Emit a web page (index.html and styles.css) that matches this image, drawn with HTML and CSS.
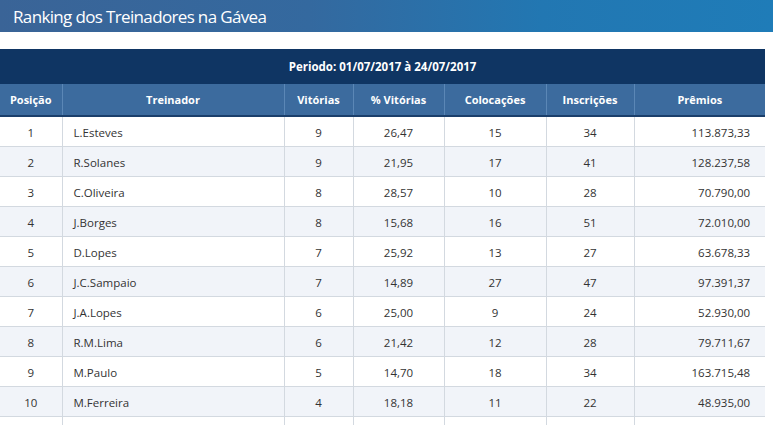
FILE: index.html
```html
<!DOCTYPE html>
<html lang="pt">
<head>
<meta charset="utf-8">
<title>Ranking dos Treinadores na Gávea</title>
<link rel="stylesheet" href="styles.css">
</head>
<body>
<header class="title-bar">
  <h1 class="title">Ranking dos Treinadores na Gávea</h1>
</header>
<main class="content">
  <table class="ranking">
    <colgroup>
      <col class="c-pos"><col class="c-name"><col class="c-vit"><col class="c-pct"><col class="c-col"><col class="c-ins"><col class="c-prem">
    </colgroup>
    <thead>
      <tr class="period-row"><th colspan="7">Periodo: 01/07/2017 à 24/07/2017</th></tr>
      <tr class="head-row">
        <th>Posição</th><th>Treinador</th><th>Vitórias</th><th>% Vitórias</th><th>Colocações</th><th>Inscrições</th><th>Prêmios</th>
      </tr>
    </thead>
    <tbody>
      <tr><td>1</td><td class="name">L.Esteves</td><td>9</td><td>26,47</td><td>15</td><td>34</td><td class="money">113.873,33</td></tr>
      <tr><td>2</td><td class="name">R.Solanes</td><td>9</td><td>21,95</td><td>17</td><td>41</td><td class="money">128.237,58</td></tr>
      <tr><td>3</td><td class="name">C.Oliveira</td><td>8</td><td>28,57</td><td>10</td><td>28</td><td class="money">70.790,00</td></tr>
      <tr><td>4</td><td class="name">J.Borges</td><td>8</td><td>15,68</td><td>16</td><td>51</td><td class="money">72.010,00</td></tr>
      <tr><td>5</td><td class="name">D.Lopes</td><td>7</td><td>25,92</td><td>13</td><td>27</td><td class="money">63.678,33</td></tr>
      <tr><td>6</td><td class="name">J.C.Sampaio</td><td>7</td><td>14,89</td><td>27</td><td>47</td><td class="money">97.391,37</td></tr>
      <tr><td>7</td><td class="name">J.A.Lopes</td><td>6</td><td>25,00</td><td>9</td><td>24</td><td class="money">52.930,00</td></tr>
      <tr><td>8</td><td class="name">R.M.Lima</td><td>6</td><td>21,42</td><td>12</td><td>28</td><td class="money">79.711,67</td></tr>
      <tr><td>9</td><td class="name">M.Paulo</td><td>5</td><td>14,70</td><td>18</td><td>34</td><td class="money">163.715,48</td></tr>
      <tr><td>10</td><td class="name">M.Ferreira</td><td>4</td><td>18,18</td><td>11</td><td>22</td><td class="money">48.935,00</td></tr>
      <tr><td></td><td class="name"></td><td></td><td></td><td></td><td></td><td class="money"></td></tr>
    </tbody>
  </table>
</main>
</body>
</html>
```
FILE: styles.css
```css
html, body {
  margin: 0;
  padding: 0;
  background: #ffffff;
  overflow: hidden;
}
body {
  font-family: "Open Sans", "DejaVu Sans", sans-serif;
  color: #333333;
}
.title-bar {
  height: 32px;
  background: linear-gradient(90deg, #3a6497 0%, #34699f 40%, #2277b2 70%, #1f7cb8 100%);
  display: flex;
  align-items: center;
  padding-left: 13px;
}
.title {
  margin: 0;
  font-size: 17px;
  font-weight: 400;
  color: #ffffff;
  letter-spacing: -0.65px;
  line-height: 1;
}
.content {
  padding-top: 17px;
}
.ranking {
  width: 765px;
  border-collapse: collapse;
  table-layout: fixed;
  font-size: 11.5px;
}
.c-pos { width: 62px; }
.c-name { width: 222px; }
.c-vit { width: 69px; }
.c-pct { width: 91px; }
.c-col { width: 102px; }
.c-ins { width: 88px; }
.c-prem { width: 131px; }
.period-row th {
  height: 35px;
  padding: 0;
  background: #0f3563;
  color: #ffffff;
  font-weight: 700;
  font-size: 11.5px;
  text-align: center;
}
.head-row th {
  height: 31px;
  padding: 0;
  background: #3c6b9e;
  color: #ffffff;
  font-weight: 700;
  font-size: 11px;
  text-align: center;
  border-left: 1px solid #5b87b6;
  border-bottom: 2px solid #1b3f6b;
}
.head-row th:first-child {
  border-left: none;
}
tbody td {
  height: 28px;
  padding: 1px 0 0;
  text-align: center;
  border-left: 1px solid #d3d9e0;
  border-bottom: 1px solid #d3d9e0;
  color: #333333;
}
tbody td:first-child {
  border-left: none;
}
tbody tr:nth-child(even) td {
  background: #f1f4f9;
}
tbody td.name {
  text-align: left;
  padding-left: 11px;
}
tbody td.money {
  text-align: right;
  padding-right: 15px;
}
```
